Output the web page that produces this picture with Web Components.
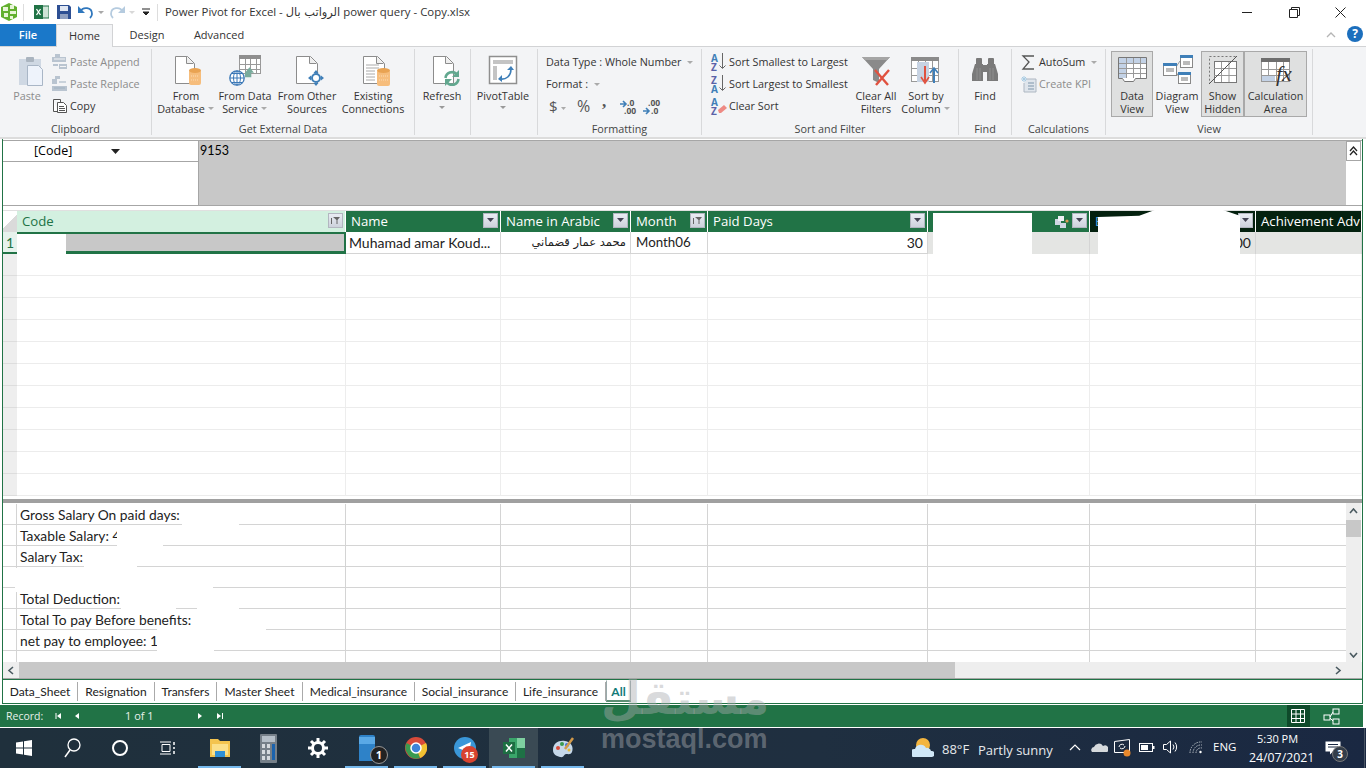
<!DOCTYPE html>
<html lang="en"><head><meta charset="utf-8"><title>Power Pivot for Excel</title>
<style>
html,body{margin:0;padding:0;background:#fff;height:768px;overflow:hidden}
body{font-family:"Open Sans","Noto Sans",sans-serif;display:flex;flex-direction:column;position:relative;width:1366px}
</style></head><body>
<x-titlebar></x-titlebar>
<x-tabs></x-tabs>
<x-ribbon>
  <x-group label="Clipboard" w="152">
    <x-big i="paste" w="50" dis="1" style="margin-left:2px">Paste</x-big>
    <div style="margin-left:-1px;width:100px">
      <x-small i="pappend" dis="1">Paste Append</x-small>
      <x-small i="preplace" dis="1">Paste Replace</x-small>
      <x-small i="copy">Copy</x-small>
    </div>
  </x-group>
  <x-group label="Get External Data" w="263">
    <x-big i="db" w="42" style="margin-left:13px" arrow2="1">From<br>Database</x-big>
    <x-big i="svc" w="68" dx="4" arrow2="1">From Data<br>Service</x-big>
    <x-big i="other" w="60" dx="2">From Other<br>Sources</x-big>
    <x-big i="exist" w="76">Existing<br>Connections</x-big>
  </x-group>
  <x-group label="" w="56"><x-big i="refresh" w="54" arrow="1">Refresh</x-big></x-group>
  <x-group label="" w="67"><x-big i="pivot" w="64" arrow="1">PivotTable</x-big></x-group>
  <x-group label="Formatting" w="164">
    <div style="margin-left:8px">
      <x-small arrow="1" gap="0">Data Type : Whole Number</x-small>
      <x-small arrow="1" gap="0">Format :</x-small>
      <x-ico n="fmt"></x-ico>
    </div>
  </x-group>
  <x-group label="Sort and Filter" w="257">
    <div style="margin-left:8px;width:145px">
      <x-small i="az">Sort Smallest to Largest</x-small>
      <x-small i="za">Sort Largest to Smallest</x-small>
      <x-small i="clr">Clear Sort</x-small>
    </div>
    <x-big i="filter" w="44" style="margin-left:-1px">Clear All<br>Filters</x-big>
    <x-big i="sortcol" w="56" arrow2="1">Sort by<br>Column</x-big>
  </x-group>
  <x-group label="Find" w="53"><x-big i="find" w="52">Find</x-big></x-group>
  <x-group label="Calculations" w="94">
    <div style="margin-left:8px">
      <x-small i="sum" arrow="1" gap="1">AutoSum</x-small>
      <x-small i="kpi" dis="1" gap="1">Create KPI</x-small>
    </div>
  </x-group>
  <x-group label="View" w="207">
    <x-big i="dview" w="42" on="1" style="margin-left:5px">Data<br>View</x-big>
    <x-big i="diag" w="48">Diagram<br>View</x-big>
    <x-big i="hidden" w="43" on="1">Show<br>Hidden</x-big>
    <x-big i="calc" w="63" on="1">Calculation<br>Area</x-big>
  </x-group>
</x-ribbon>
<x-workspace>
  <x-formula></x-formula>
  <x-datagrid></x-datagrid>
  <x-calcarea></x-calcarea>
  <x-hscroll></x-hscroll>
  <x-sheets></x-sheets>
</x-workspace>
<x-status></x-status>
<x-taskbar></x-taskbar>
<x-watermark></x-watermark>
<script>
const pg=(x,y,w,h,f='#fff')=>`<path d="M${x+.5} ${y+.5}h${w-7}l7 7v${h-8}h-${w}z" fill="${f}" stroke="#8c8c8c"/><path d="M${x+w-7.5} ${y+.5}v7h7" fill="#eee" stroke="#8c8c8c"/>`;
const cyl=(x,y,w,h)=>`<rect x="${x}" y="${y+2}" width="${w}" height="${h-2}" rx="2" fill="#f6bd7c"/><ellipse cx="${x+w/2}" cy="${y+2.5}" rx="${w/2}" ry="2.5" fill="#e9a352"/><path d="M${x+2} ${y+8}h${w-4}M${x+2} ${y+12}h${w-4}" stroke="#fbdcb4" stroke-dasharray="1 1"/>`;
const tbl=(x,y,w,h,c='#8c8c8c',hd='#8c8c8c')=>{let s=`<rect x="${x+.5}" y="${y+.5}" width="${w-1}" height="${h-1}" fill="#fff" stroke="${c}"/><rect x="${x}" y="${y}" width="${w}" height="4" fill="${hd}"/>`;for(let i=1;i<4;i++)s+=`<path d="M${x+Math.round(w*i/4)+.5} ${y+4}v${h-5}" stroke="${c}"/>`;for(let i=1;i<3;i++)s+=`<path d="M${x} ${y+4+Math.round((h-4)*i/3)+.5}h${w}" stroke="${c}"/>`;return s};
const lt=(a,b,ca,cb)=>`<text font-size="10" font-weight="700" font-family="Open Sans"><tspan x="1" y="8.500" fill="${ca}">${a}</tspan><tspan x="1" y="17.500" fill="${cb}">${b}</tspan></text>`;
const I={
paste:[34,32,`<rect x="9" y="5" width="22" height="26" fill="#cfd8e3"/><rect x="16" y="3" width="8" height="5" rx="1" fill="#aab4bf"/><path d="M19.500 14.500h11l4 4v16h-15z" transform="translate(-2 -3)" fill="#eef3fb" stroke="#a9b6c6"/>`],
pappend:[18,18,`<g fill="#b9c4d0"><rect x="4" y="1" width="5" height="3"/><rect x="1" y="4" width="14" height="5"/><rect x="2" y="11" width="5" height="2"/><rect x="8" y="11" width="8" height="5"/></g><path d="M3 6h11M9 13.500h6" stroke="#f3f4f6"/>`],
preplace:[18,18,`<g fill="#b9c4d0"><rect x="4" y="1" width="5" height="3"/><rect x="1" y="4" width="5" height="5"/><rect x="1" y="11" width="15" height="5"/></g><path d="M3 13h11M8 7h7" stroke="#9fb0c0"/>`],
copy:[18,18,`<path d="M2.500 2.500h7v3M2.500 2.500v12h4" fill="#fff" stroke="#555"/><path d="M6.500 5.500h6l3 3v7h-9z" fill="#fff" stroke="#555"/><path d="M8 9.500h5M8 11.500h6M8 13.500h6" stroke="#555"/>`],
db:[34,32,pg(6,2,19,28)+cyl(20,14,12,17)],
svc:[40,32,tbl(18,1,22,19,'#999','#8f8f8f')+`<path d="M30 23l5-6 5 6h-3v5h-7z" transform="translate(-3 -2) scale(.9)" fill="#78ab9c"/><circle cx="16" cy="24" r="7.200" fill="#fff" stroke="#3b78b7" stroke-width="1.300"/><path d="M9 24h14M16 17v14M11 19.500h10M11 28.500h10" stroke="#3b78b7"/><ellipse cx="16" cy="24" rx="3.500" ry="7" fill="none" stroke="#3b78b7"/>`],
other:[40,32,pg(11,2,21,28)+`<circle cx="31" cy="24" r="4" fill="#fff" stroke="#3f7fb8" stroke-width="2"/><path d="M31 16l2.500 3h-5zM31 32l2.500-3h-5zM23 24l3-2.500v5zM39 24l-3-2.500v5z" fill="#3f7fb8"/>`],
exist:[40,32,pg(10,2,21,28)+`<path d="M13 11h13M13 14h13M13 17h9M13 20h9M13 23h9M13 26h9" stroke="#aaa"/>`+cyl(24,14,13,18)],
refresh:[40,32,pg(11,2,20,28)+`<path d="M23.500 24a6.500 6.500 0 0 1 11-4" fill="none" stroke="#62a88f" stroke-width="2.600"/><path d="M37 16v7h-7z" fill="#62a88f"/><path d="M36.500 25a6.500 6.500 0 0 1-11 4" fill="none" stroke="#62a88f" stroke-width="2.600"/><path d="M23 32v-7h7z" fill="#62a88f"/>`],
pivot:[40,32,`<rect x="6.500" y="2.500" width="27" height="27" fill="#fff" stroke="#8f8f8f" stroke-width="1.500"/><path d="M10 6h20v4H10zM10 12h4v14h-4z" fill="#c4c4c4"/><path d="M17 25c6 1 11-3 11-10" fill="none" stroke="#3f7fb8" stroke-width="1.600"/><path d="M24 16l4-4 3 4zM19 21l-4 4 4 3z" fill="#3f7fb8"/>`],
az:[18,18,lt('A','Z','#3f7fb8','#5a62a8')+`<path d="M12.500 0v15M9.500 12.500l3 3 3-3" fill="none" stroke="#666"/>`],
za:[18,18,lt('Z','A','#5a62a8','#3f7fb8')+`<path d="M12.500 0v15M9.500 12.500l3 3 3-3" fill="none" stroke="#666"/>`],
clr:[18,18,lt('A','Z','#3f7fb8','#5a62a8')+`<path d="M8 13l6-5 3 3-6 5h-2z" fill="#ee8a84"/>`],
filter:[40,32,`<path d="M6 3h28L23 15v14l-6-3V15z" fill="#8a8a8a"/><path d="M6 3h28l-3 3H9z" fill="#a5a5a5"/><path d="M19 16l13 15M33 16L20 31" stroke="#e0513f" stroke-width="2.400"/>`],
sortcol:[40,32,tbl(5,3,28,25,'#999','#8a8a8a')+`<rect x="11" y="8" width="12" height="20" fill="#c7d3e3"/><path d="M19 12v15" stroke="#e0513f" stroke-width="2"/><path d="M15 23l4 6 4-6" fill="none" stroke="#e0513f" stroke-width="1.600"/><path d="M28 29V15" stroke="#3f7fb8" stroke-width="2"/><path d="M24 19l4-5 4 5" fill="none" stroke="#3f7fb8" stroke-width="1.600"/>`],
find:[40,32,`<g fill="#7a7a7a"><rect x="11" y="4" width="6" height="8" rx="1"/><rect x="23" y="4" width="6" height="8" rx="1"/><path d="M10 10h8v17H7v-7z"/><path d="M22 10h8l3 10v7H22z"/><rect x="18" y="11" width="4" height="7"/></g><path d="M12 14v12M15 14v12M25 14v12M28 14v12" stroke="#8f8f8f"/>`],
sum:[18,18,`<path d="M14 3H3l6 6-6 7h11" fill="none" stroke="#555" stroke-width="1.300"/>`],
kpi:[18,18,`<path d="M6 4h10v13H4V8" fill="#dfe5ec" stroke="#aeb7c2"/><path d="M8 8h6M8 11h6M8 14h6" stroke="#9fb0c0" stroke-width="1.500"/><path d="M4 1v6M1 4h6M2 2l4 4M6 2l-4 4" stroke="#a7cbe3"/>`],
dview:[40,32,(()=>{let s=`<g transform="translate(0 -2)"><path d="M6.500 5.500h28v21h-11l-2 3h-9l-2-3h-4z" fill="#fff" stroke="#777"/><rect x="7" y="6" width="27" height="5" fill="#c3d2e6"/><rect x="7" y="11" width="7" height="15" fill="#c3d2e6"/>`;[14,21,28].forEach(x=>s+=`<path d="M${x}.5 6v20" stroke="#999"/>`);[11,16,21].forEach(y=>s+=`<path d="M7 ${y}.5h27" stroke="#999"/>`);return s+'</g>'})()],
diag:[40,32,`<path d="M19 13l4-6M19 18l3 5" stroke="#999"/><g fill="#fff" stroke="#888"><rect x="23.500" y="1.500" width="12" height="12"/><rect x="6.500" y="9.500" width="13" height="12"/><rect x="21.500" y="18.500" width="12" height="11"/></g><g fill="#3f7fb8"><rect x="23" y="1" width="13" height="3"/><rect x="6" y="9" width="14" height="3"/><rect x="21" y="18" width="13" height="3"/></g><path d="M26 8h7M26 10h7M9 15h8M9 17h8M24 24h7M24 26h7" stroke="#777"/>`],
hidden:[40,32,`<path d="M6.500 2.500h27L6.500 29.500z" fill="none" stroke="#777" stroke-dasharray="2 2"/><rect x="11.500" y="7.500" width="22" height="21" fill="#fff" stroke="#777"/><path d="M18.500 8v20M26 8v20M11 14.500h22M11 21.500h22" stroke="#999"/><path d="M6 30L34 2" stroke="#555"/>`],
calc:[40,32,tbl(5,4,29,24,'#999','#6e6e6e')+`<rect x="6" y="22" width="13" height="5" fill="#c3d2e6"/><text x="20" y="27" font-family="Liberation Serif" font-style="italic" font-size="22" fill="#333">fx</text>`],
};
const base=(css,html)=>class extends HTMLElement{constructor(){super();this.attachShadow({mode:'open'}).innerHTML=`<style>${css}</style>`+(typeof html==='function'?html.call(this):html)}};
customElements.define('x-ico',class extends HTMLElement{connectedCallback(){this.attachShadow({mode:'open'}).innerHTML=`<style>:host{display:block;height:24px;margin-top:-4px}svg{display:block}</style><svg width="120" height="30" viewBox="0 -6 120 30"><text x="3" y="15" font-size="15" fill="#555" font-family="Open Sans">$</text><path d="M15 10l2.500 3 2.500-3z" fill="#aaa"/><text x="31" y="15" font-size="16" fill="#555" font-family="Open Sans">%</text><text x="56" y="10" font-size="17" font-weight="700" fill="#555" font-family="Liberation Serif">,</text><text font-size="8.500" font-weight="700" fill="#555" font-family="Open Sans"><tspan x="81" y="8.500">.0</tspan><tspan x="78" y="17">.00</tspan></text><path d="M74 7h5M77 4l3 3-3 3" stroke="#3f7fb8" stroke-width="1.600" fill="none"/><text font-size="8.500" font-weight="700" fill="#555" font-family="Open Sans"><tspan x="102" y="8.500">.00</tspan><tspan x="105" y="17">.0</tspan></text><path d="M97 14h5M100 11l3 3-3 3" stroke="#3f7fb8" stroke-width="1.600" fill="none"/></svg>`}});
customElements.define('x-titlebar',base(`:host{display:flex;align-items:center;height:24px;font:11.400px/24px "Open Sans";color:#333;position:relative;background:#fff;flex:none}
svg{display:block;flex:none}.s{width:1px;height:17px;background:#ddd;flex:none}.t{white-space:nowrap}
.w{margin-left:auto;display:flex;align-items:center;margin-right:1px}.w svg{margin-left:36px}`,`
<svg style="margin-left:0" width="19" height="20" viewBox="0 0 19 20"><path d="M9 1l8 4v10l-8 4-8-4V5z" fill="#62b02e"/><path d="M3 5h5v4H3zM10 3h4v4h-4zM10 9h6v3h-6zM10 14h3v3h-3zM4 11h4v4H4z" fill="#e8f5d8"/></svg>
<div class="s" style="margin-left:4px"></div>
<svg style="margin-left:10px" width="15" height="14" viewBox="0 0 15 14"><rect x="5" y="1" width="10" height="12" fill="#cfe3d6" stroke="#217346"/><rect x="0" y="0" width="9" height="14" fill="#217346"/><path d="M2.500 4l4 6M6.500 4l-4 6" stroke="#fff" stroke-width="1.300"/></svg>
<svg style="margin-left:8px" width="14" height="14" viewBox="0 0 14 14"><path d="M0 0h12l2 2v12H0z" fill="#2d4f93"/><rect x="3" y="1" width="8" height="5" fill="#dfe6f2"/><rect x="3" y="9" width="8" height="5" fill="#8e9fc0"/></svg>
<svg style="margin-left:7px" width="16" height="14" viewBox="0 0 16 14"><path d="M2 7c3-6 12-5 12 2 0 2-1 3-2 4" fill="none" stroke="#2f77bd" stroke-width="1.800"/><path d="M0 1v7h7z" fill="#2f77bd"/></svg>
<svg style="margin-left:3px" width="8" height="5"><path d="M1 1l3 3 3-3z" fill="#a8a8a8"/></svg>
<svg style="margin-left:4px" width="16" height="14" viewBox="0 0 16 14"><path d="M14 7C11 1 2 2 2 9c0 2 1 3 2 4" fill="none" stroke="#b5cbdf" stroke-width="1.800"/><path d="M16 1v7H9z" fill="#b5cbdf"/></svg>
<svg style="margin-left:3px" width="8" height="5"><path d="M1 1l3 3 3-3z" fill="#d8d8d8"/></svg>
<svg style="margin-left:5px" width="10" height="9" viewBox="0 0 10 9"><path d="M1 1h8M2 4l3 3 3-3z" stroke="#222" fill="#222"/></svg>
<div class="s" style="margin-left:6px"></div>
<span class="t" style="margin-left:7px">Power Pivot for Excel - <span style='font-family:"DejaVu Sans"'>الرواتب بال</span> power query - Copy.xlsx</span>
<div class="w"><svg width="11" height="11"><path d="M0 5.500h10" stroke="#222"/></svg><svg width="11" height="11"><path d="M.5 2.500h8v8h-8zM2.500 2.500v-2h8v8h-2" fill="none" stroke="#222"/></svg><svg style="margin-left:35px;margin-right:19px" width="11" height="11"><path d="M.5.500l10 10M10.500.500l-10 10" stroke="#222"/></svg></div>`));
customElements.define('x-tabs',base(`:host{display:flex;height:22px;font:11px/22px "Open Sans";color:#333;position:relative;z-index:1;background:#fff;flex:none}
div{text-align:center}.f{width:56px;background:#1a78c9;color:#fff;font-weight:600}.h{width:57px;background:#f3f4f6;border:1px solid #d2d3d5;border-bottom:0;box-sizing:border-box;height:23px}
.sp{flex:1;position:relative}
.help{position:absolute;right:3px;top:2px;width:16px;height:16px;border-radius:50%;background:#1c6fbd;color:#fff;font:700 12px/16px "Open Sans"}
svg{position:absolute;right:30px;top:8px}`,`<div class="f">File</div><div class="h">Home</div><div style="width:68px">Design</div><div style="width:76px">Advanced</div><div class="sp"><svg width="10" height="6"><path d="M1 5l4-4 4 4" fill="none" stroke="#b5b5b5" stroke-width="1.300"/></svg><div class="help">?</div></div>`));
customElements.define('x-ribbon',base(`:host{display:flex;height:88px;padding-top:2px;background:#f3f4f6;border-top:1px solid #d2d3d5;border-bottom:2px solid #dcdcdc;box-sizing:content-box;flex:none}`,`<slot></slot>`));
customElements.define('x-group',class extends HTMLElement{constructor(){super();const w=this.getAttribute('w'),l=this.getAttribute('label');this.attachShadow({mode:'open'}).innerHTML=`<style>:host{display:flex;flex-direction:column;width:${w}px;box-sizing:border-box;height:86px;padding-top:2px;border-right:1px solid #d8d9db;flex:none}
.c{display:flex;height:71px}.l{height:13px;font:10.800px/14px "Open Sans";color:#444;text-align:center}</style><div class="c"><slot></slot></div><div class="l">${l}</div>`}});
customElements.define('x-big',class extends HTMLElement{constructor(){super();const g=a=>this.getAttribute(a),on=g('on'),dis=g('dis'),dx=+(g('dx')||0);const arrow=g('arrow')?`<svg style="display:block;margin:4px auto 0" width="8" height="5"><path d="M1 0l3 3 3-3z" fill="#999"/></svg>`:'';const a2=g('arrow2')?`<svg style="display:inline-block;margin-left:3px;vertical-align:2px" width="7" height="4"><path d="M0 0l3 3 3-3z" fill="#aaa"/></svg>`:'';
const ic=I[g('i')];this.attachShadow({mode:'open'}).innerHTML=`<style>:host{display:block;width:${g('w')}px;height:66px;box-sizing:border-box;padding-top:${on?2:3}px;text-align:center;font:10.800px/13px "Open Sans";color:${dis?'#8c8c8c':'#333'};flex:none;white-space:nowrap;${on?'background:#dfe0e0;border:1px solid #a9a9a9;':''}}
svg.i{display:block;margin:0 auto 3px}.t{display:block;margin:0 -30px 0 ${-30+2*dx}px}</style><svg class="i" width="${ic[0]}" height="${ic[1]}" viewBox="0 0 ${ic[0]} ${ic[1]}">${ic[2]}</svg><span class="t"><slot></slot>${a2}</span>${arrow}`}});
customElements.define('x-small',class extends HTMLElement{constructor(){super();const g=a=>this.getAttribute(a),ic=I[g('i')],dis=g('dis');this.attachShadow({mode:'open'}).innerHTML=`<style>:host{display:flex;align-items:center;height:22px;font:10.800px/22px "Open Sans";color:${dis?'#8c8c8c':'#333'};white-space:nowrap}
svg{flex:none}</style>${ic?`<svg width="18" height="22" viewBox="0 -2 18 22" style="overflow:visible;margin-right:${g('gap')||1}px">${ic[2]}</svg>`:''}<slot></slot>${g('arrow')?'<svg width="8" height="5" style="margin-left:5px"><path d="M1 1l3 3 3-3z" fill="#aaa"/></svg>':''}`}});
customElements.define('x-workspace',base(`:host{display:flex;flex-direction:column;margin:0 3px 0 2px;border-left:1px solid #217346;border-right:1px solid #217346;background:#fff;height:565px;box-sizing:border-box;flex:none;padding-top:1px;border-bottom:1px solid #217346;position:relative}
::slotted(*){flex:none}`,`<slot></slot>`));
customElements.define('x-formula',base(`:host{display:grid;grid-template-columns:196px 1147px 15px;height:66px;box-sizing:border-box;border-top:1px solid #a6a6a6;border-bottom:1px solid #a6a6a6;font:12.500px/19px Lato}
.a{border-right:1px solid #a6a6a6}.n{height:20px;border-bottom:1px solid #a6a6a6;padding-left:31px;position:relative;font:12.500px/19px "Open Sans"}
.n svg{position:absolute;left:108px;top:8px}.v{background:#c8c8c8;padding-left:1px}.b{width:15px;height:20px;border:1px solid #a6a6a6;box-sizing:border-box;display:flex;align-items:center;justify-content:center}`,`<div class="a"><div class="n">[Code]<svg width="9" height="5"><path d="M0 0h9L4.500 5z" fill="#222"/></svg></div></div><div class="v">9153</div><div><div class="b"><svg width="9" height="10"><path d="M1 5l3.500-4 3.500 4M1 9l3.500-4 3.500 4" fill="none" stroke="#222" stroke-width="1.300"/></svg></div></div>`));
const cols='14px 329px 155px 130px 77px 220px 162px 166px 106px';
const btn=(k)=>`<i class="fb">${k==='f'?'<svg width="11" height="9"><path d="M3 1h7L7.500 4v4h-1V4z" fill="#666"/><path d="M1.500 8V2" stroke="#666"/></svg>':'<svg width="9" height="5"><path d="M1 0h7L4.500 4z" fill="#445"/></svg>'}</i>`;
customElements.define('x-datagrid',class extends HTMLElement{constructor(){super();let rows='';for(let r=0;r<11;r++){rows+=`<div class="row"><b></b>`+Array(8).fill('<span></span>').join('')+`</div>`}
this.attachShadow({mode:'open'}).innerHTML=`<style>:host{display:block;position:relative;height:293px;box-sizing:border-box;padding-top:4px;font:14px/21px Lato;color:#222;overflow:hidden}
.head,.r1,.row{display:grid;grid-template-columns:${cols}}
.head{height:21px;border-top:1px solid #e0e0e0;font:13.200px/20px "Open Sans";color:#fff}
.head>div{background:#217346;border-right:1px solid #fff;box-sizing:border-box;padding-left:5px;position:relative;white-space:nowrap;overflow:hidden}
.head>div.c0{background:linear-gradient(135deg,#fff 50%,#dadada 50%);border-right:0;padding:0}.head>div.c1{background:#d3f0e0;color:#217346}
.head>div.dk{background:#04210f}
.fb{position:absolute;right:2px;top:2px;width:15px;height:15px;background:linear-gradient(#e9ecf3,#cdd2dc);border:1px solid #b2b6c0;box-sizing:border-box;display:flex;align-items:center;justify-content:center}
.r1{height:22px;border-bottom:1px solid #d4d4d4;box-sizing:border-box}.r1>div{border-right:1px solid #d4d4d4;padding:0 4px 0 3px;box-sizing:border-box;white-space:nowrap;overflow:hidden}
.r1>div.rh{background:#e6f2ec;color:#217346;padding:0 0 0 3px;border-bottom:2px solid #217346;margin-bottom:-1px;border-right:0;height:22px}
.r1>div.sel{background:#c8c8c8;border:2px solid #217346;border-bottom:3px solid #217346;height:22px;padding:0}
.cc{background:#e4e5e3}.r1>div.ar{font-family:"DejaVu Sans";font-size:11.500px;text-align:right}.nr{text-align:right}
.row{height:22px;box-sizing:border-box;border-bottom:1px solid #ececec}.row b{background:#eeeeee;border-bottom:1px solid #ddd;margin-bottom:-1px}.row span{border-right:1px solid #ededed}
.sp{position:absolute;left:0;right:0;bottom:0;height:3px;background:#fff}
</style><div class="head"><div class="c0"></div><div class="c1">Code${btn('f')}</div><div>Name${btn()}</div><div>Name in Arabic${btn()}</div><div>Month${btn('f')}</div><div>Paid Days${btn()}</div><div><svg style="position:absolute;right:20px;top:3px" width="15" height="15"><rect x="1" y="5" width="6" height="6" fill="#cfd6e2"/><rect x="4" y="2" width="6" height="5" fill="#eef0f5"/><rect x="6" y="9" width="6" height="5" fill="#cfd6e2"/><circle cx="13" cy="7" r="1.600" fill="#d99a55"/></svg>${btn()}</div><div class="dk"><span style="color:#5aa9e6">E</span>${btn()}</div><div class="dk">Achivement Adv</div></div>
<div class="r1"><div class="rh">1</div><div class="sel"></div><div>Muhamad amar Koud...</div><div class="ar">محمد عمار قضماني</div><div style="padding-left:5px;font-size:13.300px">Month06</div><div class="nr">30</div><div class="cc"></div><div class="cc nr">000</div><div class="cc"></div></div>${rows}
<x-redact style="left:14px;top:28px;width:49px;height:21px"></x-redact>
<x-redact style="left:930px;top:7px;width:99px;height:41px"></x-redact>
<x-redact style="left:1095px;top:4px;width:142px;height:44px;clip-path:polygon(0 16%,29% 13%,40% 0,88% 0,100% 13%,100% 100%,0 100%)"></x-redact>
<div class="sp"></div>`}});
customElements.define('x-redact',base(`:host{position:absolute;background:#fff;display:block}`,``));
const labels=['Gross Salary On paid days:','Taxable Salary: 4','Salary Tax:','','Total Deduction:','Total To pay Before benefits:','net pay to employee: 1',''];
customElements.define('x-calcarea',class extends HTMLElement{constructor(){super();const rows=labels.map(l=>`<div class="row"><div class="h"></div><div class="n">${l}</div>${Array(6).fill('<div></div>').join('')}<div class="l"></div></div>`).join('');
this.attachShadow({mode:'open'}).innerHTML=`<style>:host{display:flex;position:relative;height:163px;border-top:4px solid #a0a0a0;box-sizing:border-box;font:13.800px/21px Lato;color:#222;overflow:hidden}
.g{width:1343px;flex:none;overflow:hidden;padding-top:1px;box-sizing:border-box}.row{display:grid;grid-template-columns:14px 329px 155px 130px 77px 220px 162px 166px 90px;height:21px;box-sizing:border-box;border-bottom:1px solid #d4d4d4}
.row>div{border-right:1px solid #d4d4d4;white-space:nowrap}.row>div.n{padding-left:3px;overflow:visible}.row>div.l{border-right:0}
.v{width:15px;background:#eee;position:relative;flex:none}.th{position:absolute;top:17px;left:0;right:0;height:17px;background:#c8c8c8}
.v svg{position:absolute;left:3px}
</style><div class="g">${rows}</div><div class="v"><svg style="top:5px" width="9" height="6"><path d="M1 5l3.500-4L8 5" fill="none" stroke="#4a5a60" stroke-width="1.600"/></svg><div class="th"></div><svg style="bottom:4px" width="9" height="6"><path d="M1 1l3.500 4L8 1" fill="none" stroke="#4a5a60" stroke-width="1.600"/></svg></div>
<x-redact style="left:179px;top:3px;width:57px;height:22px"></x-redact>
<x-redact style="left:114px;top:24px;width:46px;height:22px"></x-redact>
<x-redact style="left:81px;top:45px;width:53px;height:21px"></x-redact>
<x-redact style="left:12px;top:65px;width:198px;height:24px"></x-redact>
<x-redact style="left:118px;top:87px;width:55px;height:22px"></x-redact>
<x-redact style="left:194px;top:87px;width:42px;height:22px"></x-redact>
<x-redact style="left:194px;top:107px;width:69px;height:24px"></x-redact>
<x-redact style="left:154px;top:125px;width:57px;height:27px"></x-redact>`}});
customElements.define('x-hscroll',base(`:host{display:flex;height:17px;background:#eee;flex:none;position:relative;border-bottom:1px solid #a6a6a6;box-sizing:border-box}
.t{position:absolute;left:16px;width:936px;top:0;bottom:0;background:#c8c8c8}svg{position:absolute;top:4px}`,`<svg style="left:4px" width="7" height="9"><path d="M6 1L2 4.500 6 8" fill="none" stroke="#4a5a60" stroke-width="1.600"/></svg><div class="t"></div><svg style="left:1332px" width="7" height="9"><path d="M1 1l4 3.500L1 8" fill="none" stroke="#4a5a60" stroke-width="1.600"/></svg>`));
customElements.define('x-sheets',class extends HTMLElement{constructor(){super();const t=[['Data_Sheet',75],['Resignation',77],['Transfers',62],['Master Sheet',86],['Medical_insurance',112],['Social_insurance',101],['Life_insurance',90]];
this.attachShadow({mode:'open'}).innerHTML=`<style>:host{display:flex;height:23px;border-top:1px solid #217346;box-sizing:content-box;font:12px/22px Lato;color:#222;flex:none;background:#fff}
span{box-sizing:border-box;text-align:center;border-right:1px solid #aaa;height:19px;margin-top:2px;line-height:19px;white-space:nowrap}
.a{width:25px;border:1px solid #9aa;border-top:1px solid #fff;border-bottom:2px solid #5d8f74;color:#137a78;font-weight:700;height:22px;margin-top:0;line-height:22px}</style>${t.map(([n,w])=>`<span style="width:${w}px">${n}</span>`).join('')}<span class="a">All</span>`}});
customElements.define('x-status',base(`:host{display:flex;align-items:center;height:22px;margin-top:1px;background:#217346;width:1363px;flex:none;color:#e8f0ea;font:10.500px/22px "Open Sans";position:relative}
svg,span{position:absolute}.sel{position:absolute;left:1287px;top:0;width:23px;height:22px;background:#0e4a2a}`,`<span style="left:6px">Record:</span>
<svg style="left:55px;top:8px" width="7" height="7"><path d="M1 0v6" stroke="#fff"/><path d="M6 0v6L2 3z" fill="#fff"/></svg><svg style="left:75px;top:8px" width="5" height="7"><path d="M4 0v6L0 3z" fill="#fff"/></svg>
<span style="left:125px;font-size:11px">1 of 1</span>
<svg style="left:198px;top:8px" width="5" height="7"><path d="M0 0v6l4-3z" fill="#fff"/></svg><svg style="left:217px;top:8px" width="7" height="7"><path d="M0 0v6l4-3z" fill="#fff"/><path d="M5.500 0v6" stroke="#fff"/></svg>
<div class="sel"></div><svg style="left:1291px;top:4px" width="14" height="14"><path d="M.5.500h13v13H.5zM.5 5h13M.5 9.500h13M5 .5v13M9.500.5v13" fill="none" stroke="#fff"/></svg>
<svg style="left:1323px;top:3px" width="17" height="17"><g fill="none" stroke="#fff"><rect x="1" y="7" width="6" height="5"/><rect x="10" y="1" width="6" height="5"/><rect x="10" y="11" width="6" height="5"/><path d="M7 9l3-5M7 10l3 3"/></g></svg>`));
const slot=(c,u,a)=>`<div class="s ${a?'a':''}" style="width:${c}px">${u?'<em></em>':''}`;
customElements.define('x-taskbar',base(`:host{display:flex;height:40px;margin-top:1px;background:linear-gradient(90deg,#1f303c,#1f2f40 60%,#1a2842);color:#fff;position:relative;flex:none;font:13px/20px "Open Sans";overflow:hidden}
.s{height:40px;display:flex;align-items:center;justify-content:center;position:relative;flex:none}.s.a{background:#3a4a54}
em{position:absolute;left:3px;right:3px;bottom:0;height:2px;background:#76b9ed}
svg{display:block}.tx{position:absolute;white-space:nowrap}
.badge{position:absolute;border-radius:50%;text-align:center;font-weight:700;font-size:9px}`,`
${slot(48)}<svg width="16" height="16"><path d="M0 2.500l7-1v6H0zM8 1.300L16 0v7.500H8zM0 8.500h7v6l-7-1zM8 8.500h8V16l-8-1.300z" fill="#fff"/></svg></div>
${slot(48)}<svg width="18" height="20"><circle cx="11" cy="7" r="6" fill="none" stroke="#fff" stroke-width="1.300"/><path d="M7 12l-5 7" stroke="#fff" stroke-width="1.500"/></svg></div>
${slot(48)}<svg width="16" height="16"><circle cx="8" cy="8" r="7" fill="none" stroke="#fff" stroke-width="2"/></svg></div>
${slot(48)}<svg width="16" height="16"><path d="M0 2h11M0 14h11M2 4.500h8v7H2z" fill="none" stroke="#fff"/><path d="M14 2v3M14 7v2M14 11v3" stroke="#fff" stroke-width="1.500"/></svg></div>
<div style="width:3px;flex:none"></div>
${slot(49,1)}<svg width="22" height="20"><path d="M1 1h8l2 2h10v16H1z" fill="#f3c44f"/><rect x="3" y="6" width="16" height="11" fill="#fbe08a"/><path d="M6 19v-6h10v6z" fill="#2e8fd6"/></svg></div>
${slot(49)}<svg width="17" height="29" viewBox="0 0 17 29"><rect width="17" height="29" rx="1" fill="#768089"/><rect x="2" y="2" width="13" height="6" fill="#b5bfc8"/><g fill="#d5dade"><rect x="2" y="10" width="3" height="4"/><rect x="7" y="10" width="3" height="4"/><rect x="2" y="16" width="3" height="4"/><rect x="7" y="16" width="3" height="4"/><rect x="2" y="22" width="3" height="4"/><rect x="7" y="22" width="3" height="4"/></g><rect x="12" y="10" width="3" height="16" fill="#1b63ad"/></svg></div>
${slot(49)}<svg width="20" height="20"><circle cx="10" cy="10" r="5.500" fill="none" stroke="#fff" stroke-width="3"/><path d="M10 0v4M10 16v4M0 10h4M16 10h4M3 3l3 3M14 14l3 3M17 3l-3 3M6 14l-3 3" stroke="#fff" stroke-width="3"/></svg></div>
${slot(49,1)}<svg width="16" height="26"><path d="M2 0h12a2 2 0 0 1 2 2v24H0V2a2 2 0 0 1 2-2z" fill="#2e82c8"/><rect y="2" width="16" height="7" fill="#5aa9e6"/></svg><div class="badge" style="left:28px;top:18px;width:18px;height:18px;line-height:16px;background:#222;border:1px solid #999;box-sizing:border-box;font-size:11px">1</div></div>
${slot(49,1)}<svg width="22" height="22" viewBox="0 0 22 22"><circle cx="11" cy="11" r="11" fill="#d84b3a"/><path d="M11 11L21 6a11 11 0 0 1-6 15z" fill="#f1c232"/><path d="M11 11L15 21A11 11 0 0 1 1.500 6z" fill="#3a9a4f"/><circle cx="11" cy="11" r="5" fill="#3f84d8" stroke="#fff" stroke-width="1.500"/></svg></div>
${slot(49,1)}<svg width="22" height="22"><circle cx="11" cy="11" r="11" fill="#3a97d8"/><path d="M4 11l13-6-2 12-4-3-2 3v-4z" fill="#fff"/></svg><div class="badge" style="left:21px;top:18px;width:17px;height:17px;line-height:17px;background:#d8432f">15</div></div>
${slot(49,1,1)}<svg width="22" height="20"><rect x="6" y="0" width="16" height="20" fill="#3aa56a"/><rect x="14" y="0" width="8" height="10" fill="#7ed0a0"/><rect x="14" y="10" width="8" height="10" fill="#1e7145"/><rect y="4" width="12" height="12" fill="#1d6f42"/><path d="M3 6.500l6 7M9 6.500l-6 7" stroke="#fff" stroke-width="1.500"/></svg></div>
${slot(49,1)}<svg width="24" height="24" viewBox="0 0 24 24"><path d="M2 14C2 7 8 4 14 5c6 1 9 6 7 11-1 3-4 2-6 2s-2 4-6 3c-4-1-7-3-7-7z" fill="#c5d7e8"/><circle cx="7" cy="12" r="2" fill="#d84b3a"/><circle cx="11" cy="8" r="2" fill="#3a9a4f"/><circle cx="16" cy="9" r="2" fill="#3a6fd8"/><circle cx="18" cy="14" r="1.500" fill="#e5b93a"/><path d="M14 13L22 2" stroke="#d39a4a" stroke-width="2.500"/></svg></div>
<svg class="tx" style="left:912px;top:8px" width="22" height="22"><circle cx="11" cy="9" r="7" fill="#f3b53f"/><path d="M2 21a4 4 0 0 1 1-8 6 6 0 0 1 11-1 4 4 0 0 1 5 3 3 3 0 0 1 1 6z" fill="#cfe7f7"/></svg>
<span class="tx" style="left:942px;top:11px;font-size:13px;color:#e6e9ec">88°F</span><span class="tx" style="left:978px;top:12px;font-size:13px;color:#e6e9ec">Partly sunny</span>
<svg class="tx" style="left:1069px;top:15px" width="12" height="8"><path d="M1 7l5-5 5 5" fill="none" stroke="#fff" stroke-width="1.200"/></svg>
<svg class="tx" style="left:1091px;top:14px" width="17" height="11"><path d="M1 10a3 3 0 0 1 2-5 5 5 0 0 1 9-1 3.500 3.500 0 0 1 4 6z" fill="#d5d9dc"/></svg>
<svg class="tx" style="left:1114px;top:10px" width="18" height="20"><path d="M.5 3.500l15-2v13h-15z" fill="none" stroke="#fff"/><path d="M5 9a3 3 0 0 1 5-2M11 8a3 3 0 0 1-5 2" stroke="#fff" fill="none"/><circle cx="13" cy="15" r="3.500" fill="#e8882c"/></svg>
<svg class="tx" style="left:1139px;top:15px" width="16" height="10"><rect x=".5" y=".5" width="13" height="8" fill="none" stroke="#fff"/><rect x="2" y="2" width="7" height="5" fill="#fff"/><rect x="14" y="3" width="1.500" height="3" fill="#fff"/></svg>
<svg class="tx" style="left:1163px;top:12px" width="16" height="14"><path d="M.5 4.500h3l4-3.500v12l-4-3.500h-3z" fill="none" stroke="#fff"/><path d="M10 4.500a4 4 0 0 1 0 5M12 2.500a7 7 0 0 1 0 9" fill="none" stroke="#fff"/></svg>
<svg class="tx" style="left:1189px;top:13px" width="14" height="13"><path d="M1 12a11 11 0 0 1 12-11M4 12a8 8 0 0 1 9-8M7 12a5 5 0 0 1 6-5" fill="none" stroke="#b9c0c6" stroke-dasharray="1.500 1"/><circle cx="11.500" cy="11" r="1.200" fill="#fff"/></svg>
<span class="tx" style="left:1213px;top:9px;font-size:11.500px">ENG</span>
<span class="tx" style="left:1257px;top:1px;font-size:11px">5:30 PM</span><span class="tx" style="left:1249px;top:20px;font-size:12.300px">24/07/2021</span>
<svg class="tx" style="left:1325px;top:13px" width="17" height="14"><path d="M.5.500h15v10H8l-3 3v-3H.5z" fill="#fff"/><path d="M3 3.500h10M3 6h10" stroke="#1a2842"/></svg>
<div class="badge" style="left:1332px;top:18px;width:16px;height:16px;line-height:14px;border:1px solid #777;box-sizing:border-box;background:#333d4a;font-size:10px">3</div>
<div class="tx" style="left:1364px;top:0;bottom:0;width:1px;background:#4a5564"></div>`));
customElements.define('x-watermark',base(`:host{position:absolute;left:601px;top:670px;width:165px;height:82px;text-align:center;color:rgba(170,172,175,.45);pointer-events:none;font-family:"DejaVu Sans",sans-serif}
.a{font-weight:700;font-size:46px;line-height:56px;height:56px;white-space:nowrap}.b{font:700 27px/26px "Liberation Sans"}`,`<div class="a">مستقل</div><div class="b">mostaql.com</div>`));
</script></body></html>
